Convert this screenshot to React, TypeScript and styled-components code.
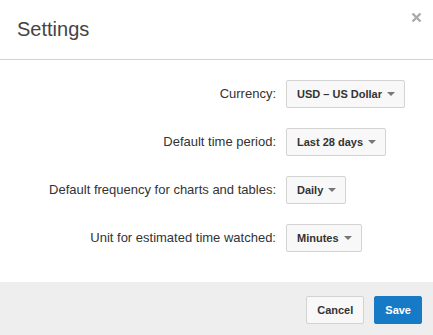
import { Fragment } from 'react';
import styled, { createGlobalStyle } from 'styled-components';

const GlobalStyle = createGlobalStyle`
  html, body {
    margin: 0;
    padding: 0;
    background: #fff;
  }
  body {
    font-family: Arial, "Liberation Sans", sans-serif;
    color: #333;
  }
`;

const Dialog = styled.div`
  width: 433px;
  height: 335px;
  display: flex;
  flex-direction: column;
  background: #fff;
`;

const Header = styled.header`
  height: 59px;
  border-bottom: 1px solid #d3d3d3;
  display: flex;
  justify-content: space-between;
  align-items: flex-start;
  padding: 0 11px 0 17px;
  box-sizing: content-box;
`;

const Title = styled.h2`
  margin: 0;
  padding-top: 17px;
  font-size: 20px;
  font-weight: 400;
  color: #444;
  line-height: 24px;
`;

const Close = styled.button`
  border: 0;
  background: none;
  padding: 0;
  margin-top: 12px;
  width: 11px;
  height: 11px;
  cursor: pointer;
  display: flex;
`;

const Body = styled.section`
  flex: 1;
  padding: 20px 0 30px;
  display: grid;
  grid-template-columns: 276px auto;
  column-gap: 10px;
  row-gap: 20px;
  align-content: start;
`;

const Label = styled.label`
  text-align: right;
  font-size: 13px;
  line-height: 28px;
  color: #333;
`;

const Dropdown = styled.button`
  justify-self: start;
  height: 28px;
  display: flex;
  align-items: center;
  gap: 5px;
  padding: 0 9px 0 10px;
  border: 1px solid #d3d3d3;
  border-radius: 2px;
  background: #f8f8f8;
  font-family: Arial, "Liberation Sans", sans-serif;
  font-size: 11px;
  font-weight: 700;
  color: #333;
  cursor: pointer;
`;

const Caret = styled.span`
  width: 0;
  height: 0;
  border-left: 4px solid transparent;
  border-right: 4px solid transparent;
  border-top: 4px solid #777;
`;

const Footer = styled.footer`
  height: 53px;
  background: #eeeeee;
  display: flex;
  justify-content: flex-end;
  align-items: flex-start;
  gap: 10px;
  padding: 14px 11px 0 0;
  box-sizing: border-box;
`;

const Button = styled.button<{ $primary?: boolean }>`
  height: 28px;
  padding: 0 10px;
  border-radius: 2px;
  border: 1px solid ${(p) => (p.$primary ? '#167ac6' : '#d3d3d3')};
  background: ${(p) => (p.$primary ? '#167ac6' : '#f8f8f8')};
  color: ${(p) => (p.$primary ? '#fff' : '#333')};
  font-family: Arial, "Liberation Sans", sans-serif;
  font-size: 11px;
  font-weight: 700;
  cursor: pointer;
`;

const settings = [
  { label: 'Currency:', value: 'USD – US Dollar' },
  { label: 'Default time period:', value: 'Last 28 days' },
  { label: 'Default frequency for charts and tables:', value: 'Daily' },
  { label: 'Unit for estimated time watched:', value: 'Minutes' },
];

export default function App() {
  return (
    <>
      <GlobalStyle />
      <Dialog>
        <Header>
          <Title>Settings</Title>
          <Close aria-label="Close">
            <svg width="11" height="11" viewBox="0 0 11 11">
              <path d="M1.5 1.5L9.5 9.5M9.5 1.5L1.5 9.5" stroke="#aaa" strokeWidth="2.4" />
            </svg>
          </Close>
        </Header>
        <Body>
          {settings.map((s) => (
            <Fragment key={s.label}>
              <Label>{s.label}</Label>
              <Dropdown>
                {s.value}
                <Caret />
              </Dropdown>
            </Fragment>
          ))}
        </Body>
        <Footer>
          <Button>Cancel</Button>
          <Button $primary>Save</Button>
        </Footer>
      </Dialog>
    </>
  );
}
